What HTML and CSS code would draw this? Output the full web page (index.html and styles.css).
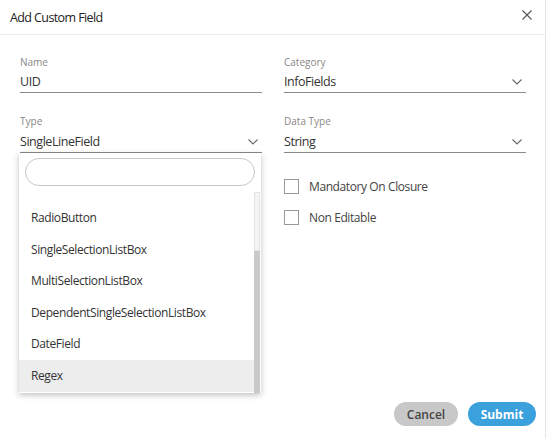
FILE: index.html
```html
<!DOCTYPE html>
<html>
<head>
<meta charset="utf-8">
<link rel="stylesheet" href="styles.css">
</head>
<body>
<div class="dialog">
  <div class="header">
    <span class="title">Add Custom Field</span>
    <svg class="close" width="10" height="10" viewBox="0 0 10 10"><path d="M0.5 0.5L9.5 9.5M9.5 0.5L0.5 9.5" stroke="#555" stroke-width="1.1" fill="none"/></svg>
  </div>
  <div class="form">
    <div class="field">
      <div class="label">Name</div>
      <div class="value">UID</div>
    </div>
    <div class="field">
      <div class="label">Category</div>
      <div class="value">InfoFields<svg class="chev" width="10" height="6" viewBox="0 0 10 6"><path d="M0.5 0.5L5 5L9.5 0.5" stroke="#666" stroke-width="1.1" fill="none"/></svg></div>
    </div>
    <div class="field type">
      <div class="label">Type</div>
      <div class="value">SingleLineField<svg class="chev" width="10" height="6" viewBox="0 0 10 6"><path d="M0.5 0.5L5 5L9.5 0.5" stroke="#666" stroke-width="1.1" fill="none"/></svg></div>
      <div class="dropdown">
        <div class="search"></div>
        <div class="listwrap">
          <ul class="list">
            <li>RadioButton</li>
            <li>SingleSelectionListBox</li>
            <li>MultiSelectionListBox</li>
            <li>DependentSingleSelectionListBox</li>
            <li>DateField</li>
            <li class="active">Regex</li>
          </ul>
          <div class="scrollbar"><div class="track"></div><div class="thumb"></div></div>
        </div>
      </div>
    </div>
    <div class="field">
      <div class="label">Data Type</div>
      <div class="value">String<svg class="chev" width="10" height="6" viewBox="0 0 10 6"><path d="M0.5 0.5L5 5L9.5 0.5" stroke="#666" stroke-width="1.1" fill="none"/></svg></div>
    </div>
    <div></div>
    <div class="checks">
      <label class="check"><span class="box"></span>Mandatory On Closure</label>
      <label class="check"><span class="box"></span>Non Editable</label>
    </div>
  </div>
  <div class="footer">
    <button class="btn cancel">Cancel</button>
    <button class="btn submit">Submit</button>
  </div>
</div>
</body>
</html>
```
FILE: styles.css
```css
html, body {
  margin: 0;
  padding: 0;
  background: #fff;
}
body {
  font-family: "Open Sans", "Noto Sans", sans-serif;
  color: #333;
}
.dialog {
  width: 545px;
  height: 438px;
  border-right: 1px solid #e4e4e4;
  display: flex;
  flex-direction: column;
  position: relative;
}
.header {
  height: 34px;
  border-bottom: 1px solid #ececec;
  display: flex;
  align-items: center;
  justify-content: space-between;
  padding: 0 13px 0 10px;
}
.title {
  font-size: 12.5px;
  color: #222;
  letter-spacing: -0.6px;
  margin-top: 0;
}
.close {
  margin-top: -5px;
}
.form {
  display: grid;
  grid-template-columns: 242px 242px;
  column-gap: 22px;
  row-gap: 21px;
  padding: 20px 20px 0 20px;
  flex: 1;
  align-content: start;
}
.field {
  position: relative;
}
.label {
  font-size: 10px;
  line-height: 14px;
  color: #888;
  margin-bottom: 3px;
}
.type .label,
.field:nth-child(4) .label {
  margin-bottom: 4px;
}
.value {
  font-size: 12.5px;
  line-height: 20px;
  height: 20px;
  border-bottom: 1px solid #8a8a8a;
  display: flex;
  align-items: center;
  justify-content: space-between;
  letter-spacing: -0.45px;
}
.chev {
  margin-right: 4px;
}
.dropdown {
  position: absolute;
  top: 39px;
  left: -1px;
  width: 242px;
  height: 240px;
  background: #fff;
  box-shadow: 0 2px 6px rgba(0,0,0,0.25);
  z-index: 5;
  display: flex;
  flex-direction: column;
}
.search {
  margin: 5px 6px 0 6px;
  height: 26px;
  border: 1px solid #c8c8c8;
  border-radius: 14px;
}
.listwrap {
  position: relative;
  margin-top: 6px;
  flex: 1;
  overflow: hidden;
}
.list {
  list-style: none;
  margin: 0;
  padding: 10px 0 0 0;
  margin-right: 7px;
}
.list li {
  height: 31.6px;
  line-height: 31.6px;
  font-size: 12px;
  padding-left: 12px;
  color: #333;
  letter-spacing: -0.4px;
}
.list li.active {
  background: #ededed;
}
.scrollbar {
  position: absolute;
  top: 0;
  right: 1px;
  width: 6px;
  bottom: 0;
  display: flex;
  flex-direction: column;
}
.track {
  height: 59px;
  background: #f4f4f4;
  border: 1px solid #e2e2e2;
  box-sizing: border-box;
}
.thumb {
  flex: 1;
  background: #c9c9c9;
}
.checks {
  display: flex;
  flex-direction: column;
  gap: 14px;
  margin-top: 4px;
}
.check {
  display: flex;
  align-items: center;
  font-size: 12px;
  color: #444;
  letter-spacing: -0.4px;
}
.box {
  width: 13px;
  height: 13px;
  border: 1px solid #999;
  margin-right: 10px;
}
.footer {
  display: flex;
  justify-content: flex-end;
  gap: 10px;
  padding: 0 9px 12px 0;
}
.btn {
  height: 24px;
  border: none;
  border-radius: 12px;
  font-family: "Open Sans", sans-serif;
  font-size: 12px;
  font-weight: 600;
  padding: 0;
}
.cancel {
  width: 64px;
  background: #c8c8c8;
  color: #444;
}
.submit {
  width: 68px;
  background: #3ba1dc;
  color: #fff;
  font-weight: 700;
}
```
